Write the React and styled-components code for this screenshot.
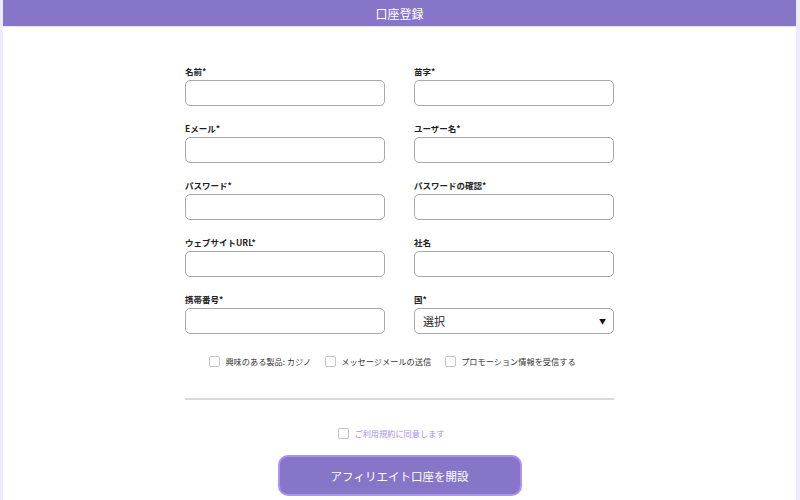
import React from 'react';
import styled, { createGlobalStyle } from 'styled-components';

const GlobalStyle = createGlobalStyle`
  body {
    margin: 0;
    background: #efebff;
    font-family: "Noto Sans CJK JP", "Noto Sans", sans-serif;
  }
`

const Page = styled.div`
  padding: 0 4px 0 3px;
`

const Card = styled.div`
  background: #fff;
  min-height: 500px;
`

const Header = styled.div`
  height: 27px;
  background: #8775c8;
  color: #fff;
  font-size: 12px;
  line-height: 27px;
  text-align: center;
  border-bottom: 1px solid #e6e1f7;
  box-sizing: border-box;
`

const Form = styled.form`
  width: 429px;
  margin: 0 auto;
  padding-top: 38px;
  display: flex;
  flex-direction: column;
`

const Grid = styled.div`
  display: grid;
  grid-template-columns: 200px 200px;
  column-gap: 29px;
  row-gap: 16px;
`

const Field = styled.div`
  display: flex;
  flex-direction: column;
`

const Label = styled.label`
  font-size: 8.5px;
  font-weight: 700;
  line-height: 12px;
  color: #222;
  margin-bottom: 3px;
`

const Input = styled.input`
  box-sizing: border-box;
  height: 26px;
  width: 100%;
  border: 1px solid #a9a9a9;
  border-radius: 5px;
  padding: 0 8px;
  font: inherit;
`

const Select = styled.div`
  box-sizing: border-box;
  height: 26px;
  border: 1px solid #a9a9a9;
  border-radius: 5px;
  padding: 0 7px 0 8px;
  display: flex;
  align-items: center;
  justify-content: space-between;
  font-size: 11px;
  color: #222;
`

const Arrow = styled.span`
  font-size: 7px;
  color: #111;
`

const Options = styled.div`
  display: flex;
  justify-content: center;
  gap: 14px;
  margin-top: 21px;
  padding-right: 14px;
`

const Check = styled.label`
  display: flex;
  align-items: center;
  gap: 5px;
  font-size: 8.2px;
  line-height: 12px;
  color: ${p => p.$accent ? '#a88ef2' : '#333'};
`

const Box = styled.span`
  width: 9px;
  height: 9px;
  border: 1px solid #c4c4c4;
  border-radius: 2px;
  background: #fff;
`

const Divider = styled.hr`
  border: none;
  height: 2px;
  background: #d9d9d9;
  margin: 31px 0 0;
`

const Terms = styled.div`
  display: flex;
  justify-content: center;
  margin-top: 27px;
  padding-right: 16px;
`

const Submit = styled.button`
  align-self: center;
  margin-top: 16px;
  width: 244px;
  height: 41px;
  box-sizing: border-box;
  background: #8775c8;
  border: 2px solid #ab93f3;
  border-radius: 10px;
  color: #fff;
  font-family: inherit;
  font-size: 11.5px;
`

const fields = [
  ['名前*', '苗字*'],
  ['Eメール*', 'ユーザー名*'],
  ['パスワード*', 'パスワードの確認*'],
  ['ウェブサイトURL*', '社名'],
]

export default function App() {
  return (
    <Page>
      <GlobalStyle />
      <Card>
        <Header>口座登録</Header>
        <Form onSubmit={e => e.preventDefault()}>
          <Grid>
            {fields.flat().map(name => (
              <Field key={name}>
                <Label>{name}</Label>
                <Input type={name.startsWith('パスワード') ? 'password' : 'text'} />
              </Field>
            ))}
            <Field>
              <Label>携帯番号*</Label>
              <Input />
            </Field>
            <Field>
              <Label>国*</Label>
              <Select>
                <span>選択</span>
                <Arrow>▼</Arrow>
              </Select>
            </Field>
          </Grid>
          <Options>
            <Check><Box />興味のある製品: カジノ</Check>
            <Check><Box />メッセージメールの送信</Check>
            <Check><Box />プロモーション情報を受信する</Check>
          </Options>
          <Divider />
          <Terms>
            <Check $accent><Box />ご利用規約に同意します</Check>
          </Terms>
          <Submit type="submit">アフィリエイト口座を開設</Submit>
        </Form>
      </Card>
    </Page>
  )
}
